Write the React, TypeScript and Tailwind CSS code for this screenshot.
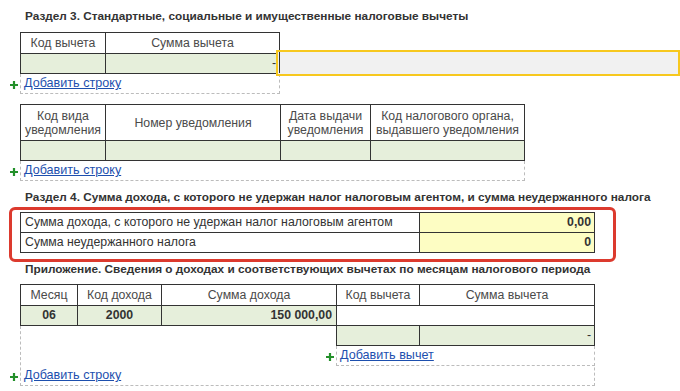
import React from "react";

const cell = "border-r border-b border-[#333333]";
const head = `${cell} flex items-center justify-center text-center text-[#4a4a4a]`;
const green = "bg-[#e6efdb]";
const dashed = "border-l border-r border-b border-dashed border-[#bcbcbc]";

function Plus() {
  return (
    <svg width="8" height="8" viewBox="0 0 8 8" className="absolute left-[-11px] top-[7px]">
      <path d="M4 0v8M0 4h8" stroke="#23902a" strokeWidth="2.2" />
    </svg>
  );
}

function AddLink({ label }: { label: string }) {
  return (
    <div className="relative h-[19px] flex items-center pl-[3px]">
      <Plus />
      <span className="text-[#1d4fae] underline leading-[19px] text-[12.6px]">{label}</span>
    </div>
  );
}

function Title({ children, className = "" }: { children: React.ReactNode; className?: string }) {
  return (
    <div className={`pl-[25px] leading-[15px] font-bold text-[11.8px] text-[#333333] whitespace-nowrap ${className}`}>
      {children}
    </div>
  );
}

export default function App() {
  return (
    <div
      className="relative w-[680px] h-[391px] overflow-hidden bg-white text-[12.3px] text-[#333333]"
      style={{ fontFamily: '"Liberation Sans", Arial, sans-serif' }}
    >
      <Title className="pt-[9px]">Раздел 3. Стандартные, социальные и имущественные налоговые вычеты</Title>

      {/* Раздел 3, таблица вычетов */}
      <div className="relative ml-[20px] mt-[8px] w-[260px]">
        <div className="flex border-t border-l border-[#333333]">
          <div className={`${head} w-[85px] h-[21px]`}>Код вычета</div>
          <div className={`${head} w-[174px] h-[21px]`}>Сумма вычета</div>
        </div>
        <div className="flex border-l border-[#333333]">
          <div className={`${cell} ${green} w-[85px] h-[20px]`} />
          <div className={`${cell} ${green} w-[174px] h-[20px] flex items-center justify-end pr-[3px]`}>-</div>
        </div>
        <div className={`${dashed} w-[260px]`}>
          <AddLink label="Добавить строку" />
        </div>
        <div className="absolute left-[256px] top-[18px] w-[404px] h-[26px] border-2 border-[#f7c81e] bg-[#f1f1f1]">
          <div className="absolute left-[1px] top-0 w-px h-[21px] bg-[#333333]" />
        </div>
      </div>

      {/* Уведомления */}
      <div className="ml-[20px] mt-[10px] w-[505px]">
        <div className="flex border-t border-l border-[#333333] leading-[14px]">
          <div className={`${head} w-[85px] h-[36px]`}>Код вида<br />уведомления</div>
          <div className={`${head} w-[175px] h-[36px]`}>Номер уведомления</div>
          <div className={`${head} w-[90px] h-[36px]`}>Дата выдачи<br />уведомления</div>
          <div className={`${head} w-[154px] h-[36px]`}>Код налогового органа,<br />выдавшего уведомления</div>
        </div>
        <div className="flex border-l border-[#333333]">
          <div className={`${cell} ${green} w-[85px] h-[20px]`} />
          <div className={`${cell} ${green} w-[175px] h-[20px]`} />
          <div className={`${cell} ${green} w-[90px] h-[20px]`} />
          <div className={`${cell} ${green} w-[154px] h-[20px]`} />
        </div>
        <div className={`${dashed} w-[505px]`}>
          <AddLink label="Добавить строку" />
        </div>
      </div>

      <Title className="mt-[9px]">
        Раздел 4. Сумма дохода, с которого не удержан налог налоговым агентом, и сумма неудержанного налога
      </Title>

      {/* Раздел 4 */}
      <div className="ml-[9px] mt-[2px] w-[607px] border-[3px] border-[#dc3a2e] rounded-[6px] pl-[8px] pt-[2px] pb-[6px]">
        <div className="w-[575px] border-t border-l border-[#333333]">
          <div className="flex">
            <div className={`${cell} w-[399px] h-[20px] flex items-center pl-[4px]`}>
              Сумма дохода, с которого не удержан налог налоговым агентом
            </div>
            <div className={`${cell} bg-[#fdfdc3] w-[175px] h-[20px] flex items-center justify-end pr-[3px] font-bold`}>
              0,00
            </div>
          </div>
          <div className="flex">
            <div className={`${cell} w-[399px] h-[20px] flex items-center pl-[4px]`}>Сумма неудержанного налога</div>
            <div className={`${cell} bg-[#fdfdc3] w-[175px] h-[20px] flex items-center justify-end pr-[3px] font-bold`}>
              0
            </div>
          </div>
        </div>
      </div>

      <Title>Приложение. Сведения о доходах и соответствующих вычетах по месяцам налогового периода</Title>

      {/* Приложение */}
      <div className="ml-[20px] mt-[7px] w-[575px]">
        <div className="flex border-t border-l border-[#333333]">
          <div className={`${head} w-[57px] h-[21px]`}>Месяц</div>
          <div className={`${head} w-[84px] h-[21px]`}>Код дохода</div>
          <div className={`${head} w-[175px] h-[21px]`}>Сумма дохода</div>
          <div className={`${head} w-[83px] h-[21px]`}>Код вычета</div>
          <div className={`${head} w-[175px] h-[21px]`}>Сумма вычета</div>
        </div>
        <div className="flex border-l border-[#333333] font-bold">
          <div className={`${cell} ${green} w-[57px] h-[20px] flex items-center justify-center`}>06</div>
          <div className={`${cell} ${green} w-[84px] h-[20px] flex items-center justify-center`}>2000</div>
          <div className={`${cell} ${green} w-[175px] h-[20px] flex items-center justify-end pr-[4px]`}>150 000,00</div>
          <div className={`${cell} w-[258px] h-[20px]`} />
        </div>
        <div className={`${dashed} w-[575px]`}>
          <div className="flex justify-end">
            <div className="relative z-10 w-[259px] -mr-px">
              <div className="flex border-l border-[#333333]">
                <div className={`${cell} ${green} w-[83px] h-[20px]`} />
                <div className={`${cell} ${green} w-[175px] h-[20px] flex items-center justify-end pr-[3px]`}>-</div>
              </div>
              <div className={`${dashed} w-[259px] bg-white`}>
                <AddLink label="Добавить вычет" />
              </div>
            </div>
          </div>
          <AddLink label="Добавить строку" />
        </div>
      </div>
    </div>
  );
}
